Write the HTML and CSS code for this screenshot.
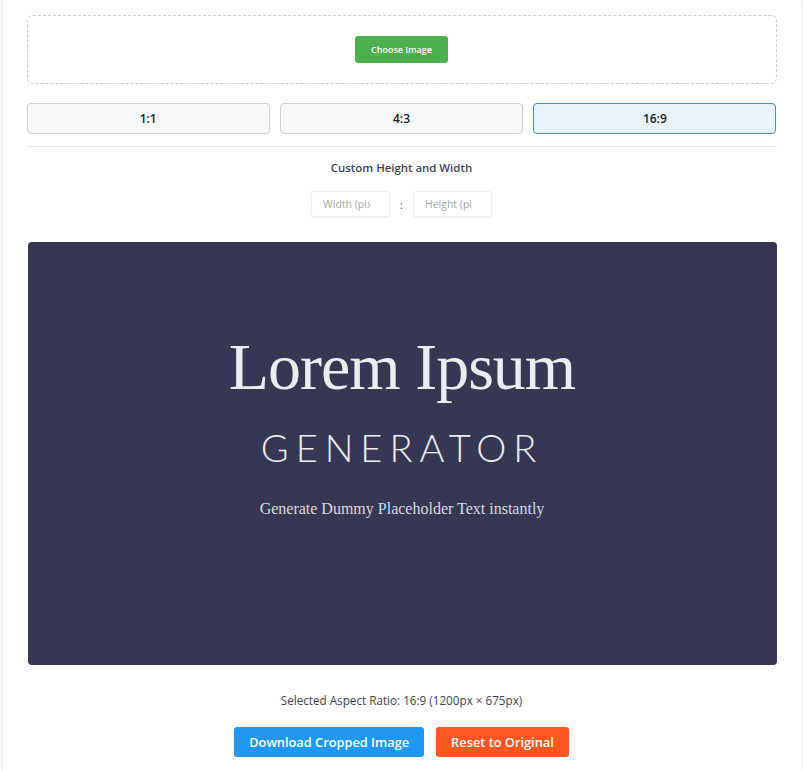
FILE: index.html
```html
<!DOCTYPE html>
<html lang="en">
<head>
    <meta charset="UTF-8">
    <meta name="viewport" content="width=device-width, initial-scale=1.0">
    <title>Image Cropper</title>
    <link rel="stylesheet" href="styles.css">
</head>
<body>
    <div class="container">
        <div class="upload-area">
            <button class="choose-btn">Choose Image</button>
        </div>

        <div class="ratio-buttons">
            <button class="ratio-btn">1:1</button>
            <button class="ratio-btn">4:3</button>
            <button class="ratio-btn active">16:9</button>
        </div>

        <div class="custom-size">
            <h3>Custom Height and Width</h3>
            <div class="size-inputs">
                <input type="number" placeholder="Width (pixels)">
                <span class="sep">:</span>
                <input type="number" placeholder="Height (pixels)">
            </div>
        </div>

        <div class="preview">
            <div class="preview-title">Lorem Ipsum</div>
            <div class="preview-sub">GENERATOR</div>
            <div class="preview-tag">Generate Dummy Placeholder Text instantly</div>
        </div>

        <p class="ratio-info">Selected Aspect Ratio: 16:9 (1200px &times; 675px)</p>

        <div class="actions">
            <button class="download-btn">Download Cropped Image</button>
            <button class="reset-btn">Reset to Original</button>
        </div>
    </div>
</body>
</html>
```

FILE: styles.css
```css
body {
    font-family: "Open Sans", "Noto Sans", Arial, sans-serif;
    margin: 0;
    padding: 0;
    background-color: #fbfbfb;
}

.container {
    width: 750px;
    margin: 0 auto;
    padding: 15px 24px 14px;
    background-color: #ffffff;
    box-shadow: 0 0 3px rgba(0, 0, 0, 0.12);
}

.upload-area {
    height: 67px;
    border: 1px dashed #cfcfcf;
    border-radius: 6px;
    display: flex;
    align-items: center;
    justify-content: center;
}

.choose-btn {
    background-color: #4caf50;
    color: white;
    border: none;
    border-radius: 3px;
    width: 93px;
    height: 27px;
    font-family: inherit;
    font-size: 9px;
    font-weight: 600;
    cursor: pointer;
}

.ratio-buttons {
    display: flex;
    gap: 10px;
    margin-top: 19px;
    padding-bottom: 12px;
    border-bottom: 1px solid #e6e6e6;
}

.ratio-btn {
    flex: 1;
    height: 31px;
    background-color: #f6f8fa;
    border: 1px solid #cdd0d4;
    border-radius: 4px;
    font-family: inherit;
    font-size: 12px;
    font-weight: 600;
    color: #222;
    cursor: pointer;
}

.ratio-btn.active {
    background-color: #e8f4fd;
    border-color: #4a90c8;
}

.custom-size {
    text-align: center;
    margin-top: 13px;
}

.custom-size h3 {
    margin: 0;
    font-size: 11.4px;
    font-weight: 600;
    color: #3d4452;
}

.size-inputs {
    display: flex;
    justify-content: center;
    align-items: center;
    gap: 9px;
    margin-top: 16px;
}

.size-inputs input {
    width: 79px;
    height: 26px;
    box-sizing: border-box;
    padding: 0 4px 0 11px;
    border: 1px solid #f0f0f0;
    border-radius: 3px;
    box-shadow: 0 1px 2px rgba(0, 0, 0, 0.05);
    font-family: inherit;
    font-size: 10.5px;
    color: #333;
}

.size-inputs input::placeholder {
    color: #a2a6ad;
}

.size-inputs .sep {
    font-size: 11px;
    color: #555;
    padding: 0 1px;
}

.preview {
    margin: 25px 0 0 1px;
    height: 423px;
    background-color: #363753;
    border-radius: 4px;
    display: flex;
    flex-direction: column;
    align-items: center;
    justify-content: center;
    color: #ecedf2;
}

.preview-title {
    font-family: "Liberation Serif", "DejaVu Serif", serif;
    font-size: 66px;
    line-height: 1;
    letter-spacing: -1px;
    margin-top: -56px;
}

.preview-sub {
    font-family: "Lato", "Open Sans", sans-serif;
    font-weight: 300;
    font-size: 38px;
    letter-spacing: 7px;
    margin-top: 24px;
}

.preview-tag {
    font-family: "Liberation Serif", "DejaVu Serif", serif;
    font-size: 16px;
    margin-top: 30px;
    color: #d9dae3;
}

.ratio-info {
    text-align: center;
    margin: 27px 0 0;
    font-size: 11.7px;
    color: #3d4452;
}

.actions {
    display: flex;
    justify-content: center;
    gap: 12px;
    margin-top: 19px;
}

.actions button {
    height: 30px;
    padding: 0 15px;
    border: none;
    border-radius: 3px;
    color: white;
    font-family: inherit;
    font-size: 12.8px;
    font-weight: 600;
    cursor: pointer;
}

.download-btn {
    background-color: #2196f3;
}

.reset-btn {
    background-color: #ff5722;
}
```
